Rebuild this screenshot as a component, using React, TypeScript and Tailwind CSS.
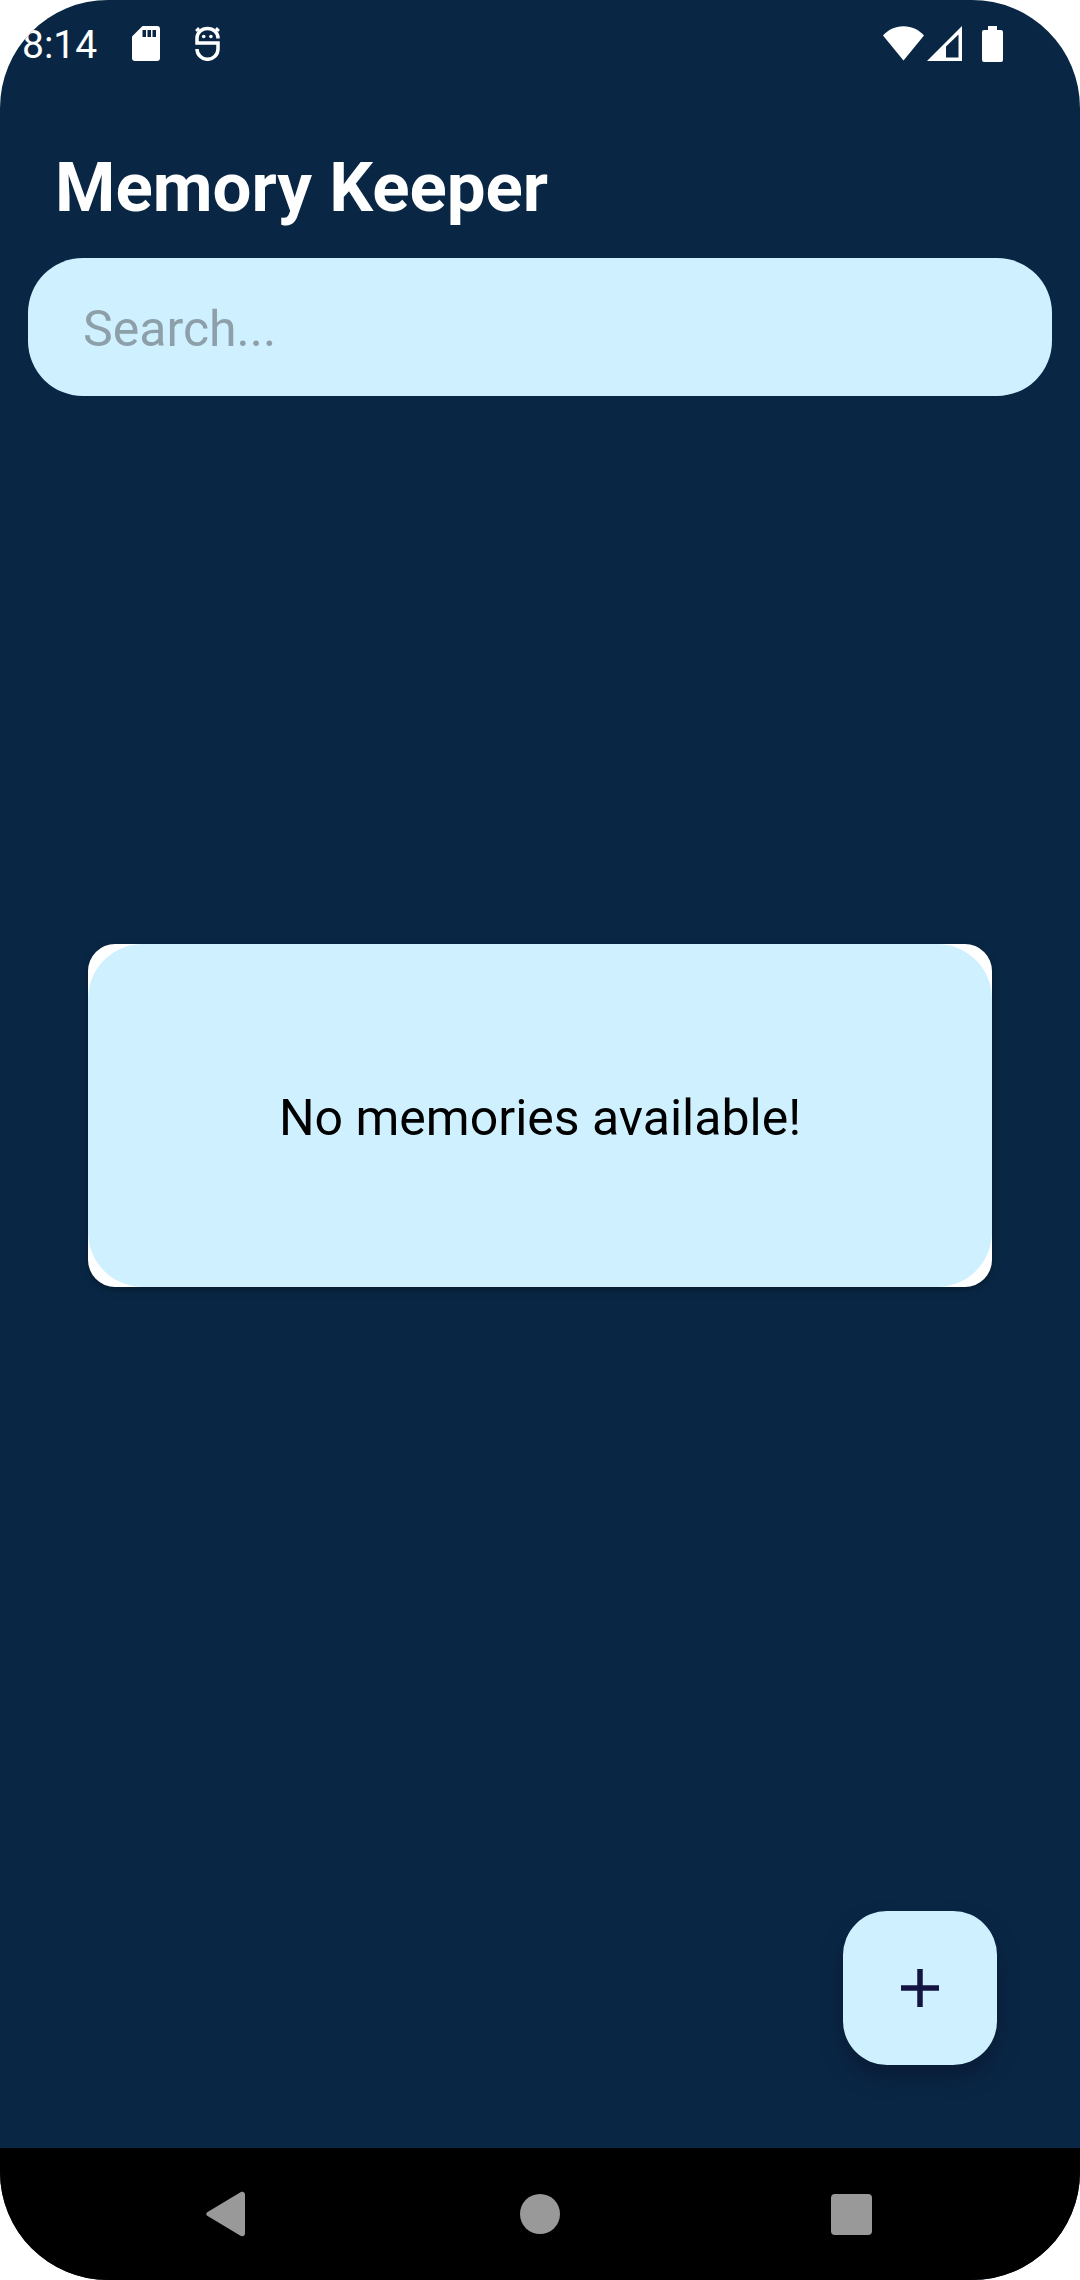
import React from "react";

function SdCardIcon() {
  return (
    <svg viewBox="0 0 28 35" className="h-[35px] w-[28px]" aria-hidden="true">
      <path
        fill="#fff"
        fillRule="evenodd"
        d="M10.500 0H25a3 3 0 0 1 3 3v29a3 3 0 0 1-3 3H3a3 3 0 0 1-3-3V10.500ZM10.500 4v7h3.500V4ZM15.500 4v7h3.500V4ZM20.500 4v7H24V4Z"
      />
    </svg>
  );
}

function DebugIcon() {
  return (
    <svg viewBox="0 0 25 35" className="h-[35px] w-[25px]" fill="none" stroke="#fff" strokeWidth="3.500" aria-hidden="true">
      <path d="M23 12.500V12A10.500 9.500 0 0 0 2 12V17H23V23A10.500 10.300 0 0 1 2 23" />
      <path d="M2 2.500L5 6M1 5L4 2M23 2.500L20 6M24 5L21 2" strokeWidth="2.500" />
      <circle cx="8.700" cy="10.500" r="1.800" fill="#fff" stroke="none" />
      <circle cx="15.900" cy="10.500" r="1.800" fill="#fff" stroke="none" />
    </svg>
  );
}

function WifiIcon() {
  return (
    <svg viewBox="0 0 41 35" className="h-[35px] w-[41px]" aria-hidden="true">
      <path fill="#fff" d="M20.500 34.500L0 9.500C5 4 12 .3 20.500.3S36 4 41 9.500Z" />
    </svg>
  );
}

function SignalIcon() {
  return (
    <svg viewBox="0 0 35 35" className="h-[35px] w-[35px]" aria-hidden="true">
      <path fill="#fff" fillRule="evenodd" d="M0 35L35 0V35ZM19 20.500V31.500H31.500V8.500Z" />
    </svg>
  );
}

function BatteryIcon() {
  return (
    <svg viewBox="0 0 21 36" className="h-[36px] w-[21px]" aria-hidden="true">
      <path fill="#fff" d="M6 0h9v4h4a2 2 0 0 1 2 2v28a2 2 0 0 1-2 2H2a2 2 0 0 1-2-2V6a2 2 0 0 1 2-2h4Z" />
    </svg>
  );
}

function StatusBar() {
  return (
    <header className="flex h-[83px] shrink-0 items-center justify-between pt-1 pr-[77px] pl-[22px]">
      <div className="flex items-center">
        <time className="pt-[2px] text-[39px] leading-[48px] text-white">8:14</time>
        <div className="ml-[35px] flex items-center gap-[35px]">
          <SdCardIcon />
          <DebugIcon />
        </div>
      </div>
      <div className="flex items-center">
        <WifiIcon />
        <span className="ml-[3px]">
          <SignalIcon />
        </span>
        <span className="ml-5">
          <BatteryIcon />
        </span>
      </div>
    </header>
  );
}

function NavigationBar() {
  return (
    <nav aria-label="System navigation" className="flex h-[132px] shrink-0 items-center justify-between bg-black px-[189px]">
      <button type="button" aria-label="Back" className="flex size-20 items-center justify-center">
        <svg viewBox="0 0 46 46" className="size-[46px]" aria-hidden="true">
          <path fill="#999" d="M1.200 21.200L34.500 1.200C36.500 0 39 1 39 4V42C39 45 36.500 46 34.500 44.800L1.200 24.800C0 24 0 22 1.200 21.200Z" />
        </svg>
      </button>
      <button type="button" aria-label="Home" className="flex size-20 items-center justify-center">
        <span className="size-10 rounded-full bg-[#999999]" />
      </button>
      <button type="button" aria-label="Recent apps" className="flex size-20 items-center justify-center">
        <span className="size-[41px] rounded bg-[#999999]" />
      </button>
    </nav>
  );
}

export default function App() {
  return (
    <div className="min-h-screen bg-white font-['Roboto',sans-serif]">
      <div className="flex min-h-screen flex-col overflow-hidden rounded-[108px] bg-[#092745]">
        <StatusBar />
        <main className="grid flex-1 grid-rows-[1fr_auto_1fr]">
          <section className="px-7 pt-[65px]">
            <h1 className="px-[27px] text-[69px] leading-[80px] font-bold text-white">Memory Keeper</h1>
            <input
              type="search"
              aria-label="Search memories"
              placeholder="Search..."
              className="mt-[30px] block h-[138px] w-full appearance-none rounded-[55px] bg-[#cff0ff] px-[55px] pt-1 text-[50px] text-black outline-none placeholder:text-[#8da0aa]"
            />
          </section>
          <section className="mx-[88px] rounded-[27px] bg-white shadow-[0_3px_8px_rgba(0,0,0,0.3)]">
            <p className="rounded-[55px] bg-[#cff0ff] px-10 pt-[145px] pb-[139px] text-center text-[50px] leading-[59px] text-black">
              No memories available!
            </p>
          </section>
          <div className="flex items-end justify-end pr-[83px] pb-[83px]">
            <button
              type="button"
              aria-label="Add memory"
              className="flex size-[154px] items-center justify-center rounded-[44px] bg-[#cff0ff] shadow-[0_12px_22px_rgba(10,10,30,0.4)]"
            >
              <svg viewBox="0 0 38 38" className="size-[38px]" aria-hidden="true">
                <path d="M19 0V38M0 19H38" stroke="#141442" strokeWidth="5.500" />
              </svg>
            </button>
          </div>
        </main>
        <NavigationBar />
      </div>
    </div>
  );
}
